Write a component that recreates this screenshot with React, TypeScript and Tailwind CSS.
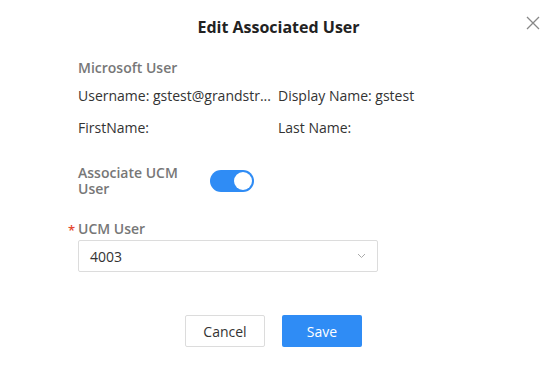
import React, { useState } from 'react';

export default function App() {
  const [linked, setLinked] = useState(true);

  return (
    <div className="w-[557px] h-[370px] bg-white relative font-['Open_Sans',sans-serif] text-[14px] text-[#333]">
      <button className="absolute right-[17px] top-[16px] text-[#888]">
        <svg width="14" height="14" viewBox="0 0 14 14" fill="none" stroke="currentColor" strokeWidth="1.3">
          <path d="M1 1L13 13M13 1L1 13" />
        </svg>
      </button>

      <h2 className="pt-[16px] text-center text-[16px] font-bold text-[#222] leading-[22px]">Edit Associated User</h2>

      <div className="px-[78px] pt-[20px]">
        {/* Section: Microsoft user */}
        <div className="text-[14px] font-semibold text-[#777] leading-[20px]">Microsoft User</div>

        <div className="grid grid-cols-[200px_200px] mt-[8px] leading-[20px]">
          <span className="whitespace-nowrap">Username: gstest@grandstr...</span>
          <span className="whitespace-nowrap">Display Name: gstest</span>
          <span className="mt-[12px]">FirstName:</span>
          <span className="mt-[12px]">Last Name:</span>
        </div>

        <div className="flex items-center mt-[27px]">
          <label className="w-[132px] text-[14px] font-semibold text-[#777] leading-[16px]">Associate UCM User</label>
          <button
            onClick={() => setLinked(!linked)}
            className={`w-[44px] h-[22px] rounded-full flex items-center px-[2px] ${linked ? 'bg-[#2f8cf5] justify-end' : 'bg-[#ccc] justify-start'}`}
          >
            <span className="w-[18px] h-[18px] rounded-full bg-white" />
          </button>
        </div>

        <div className="mt-[22px]">
          <label className="relative block text-[14px] font-semibold text-[#777] leading-[20px]">
            <span className="absolute left-[-10px] top-[1px] text-[#e5482f] text-[13px]">*</span>
            UCM User
          </label>
          <div className="mt-[1px] w-[300px] h-[32px] border border-[#dcdcdc] rounded-[2px] flex items-center justify-between pl-[11px] pr-[11px]">
            <span className="text-[14px] text-[#333]">4003</span>
            <svg width="9" height="6" viewBox="0 0 9 6" fill="none" stroke="#aaa" strokeWidth="1">
              <path d="M1 1L4.5 4.5L8 1" />
            </svg>
          </div>
        </div>
      </div>

      <div className="flex justify-center gap-[17px] mt-[43px] pr-[10px]">
        <button className="w-[80px] h-[32px] border border-[#dcdcdc] rounded-[2px] text-[14px] text-[#333]">Cancel</button>
        <button className="w-[80px] h-[32px] bg-[#2f8cf5] rounded-[2px] text-[14px] text-white">Save</button>
      </div>
    </div>
  );
}
